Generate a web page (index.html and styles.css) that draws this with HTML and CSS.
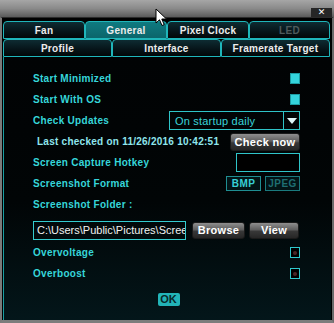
FILE: index.html
```html
<!DOCTYPE html>
<html lang="en">
<head><meta charset="UTF-8">
<meta name="viewport" content="width=device-width,initial-scale=1.0">
<title>Settings</title>
<link rel="stylesheet" href="styles.css">
</head>
<body>

<div class="window">
  <!-- title bar (only its lower part is visible) -->
  <div class="titlebar"><span class="close">&#x2715;</span></div>

  <div class="frame">
    <div class="tabs">
      <div class="tabrow four">
        <div class="tab">Fan</div>
        <div class="tab active">General</div>
        <div class="tab">Pixel Clock</div>
        <div class="tab off">LED</div>
      </div>
      <div class="tabrow three">
        <div class="tab">Profile</div>
        <div class="tab">Interface</div>
        <div class="tab">Framerate Target</div>
      </div>
    </div>

    <div class="panel">
      <div class="row">
        <span class="label">Start Minimized</span>
        <span class="check on"></span>
      </div>
      <div class="row">
        <span class="label">Start With OS</span>
        <span class="check on"></span>
      </div>
      <div class="row">
        <span class="label">Check Updates</span>
        <div class="select">
          <span class="select-text">On startup daily</span>
          <span class="select-arrow"></span>
        </div>
      </div>
      <div class="row">
        <span class="last">Last checked on 11/26/2016 10:42:51</span>
        <button class="btn check-now">Check now</button>
      </div>
      <div class="row">
        <span class="label">Screen Capture Hotkey</span>
        <span class="hotkey"></span>
      </div>
      <div class="row">
        <span class="label">Screenshot Format</span>
        <div class="formats">
          <span class="fmt sel">BMP</span>
          <span class="fmt">JPEG</span>
        </div>
      </div>
      <div class="row">
        <span class="label">Screenshot Folder :</span>
      </div>
      <div class="row path-row">
        <div class="path"><span>C:\Users\Public\Pictures\Screenshots</span></div>
        <button class="btn browse">Browse</button>
        <button class="btn view">View</button>
      </div>
      <div class="row">
        <span class="label">Overvoltage</span>
        <span class="check"></span>
      </div>
      <div class="row">
        <span class="label">Overboost</span>
        <span class="check"></span>
      </div>
      <div class="ok-row">
        <button class="ok">OK</button>
      </div>
    </div>
  </div>

  <!-- mouse pointer caught in the screenshot -->
  <svg class="cursor" width="13" height="19" viewBox="0 0 13 19">
    <path d="M1 1 L1 15 L4.5 11.8 L7 17.5 L9.2 16.6 L6.8 11 L11.5 11 Z" fill="#fff" stroke="#000" stroke-width="1"/>
  </svg>
</div>

</body>
</html>
```

FILE: styles.css
```css
*,*::before,*::after{box-sizing:border-box;margin:0;padding:0}
body{
  background:#000;
  font-family:"Liberation Sans",Arial,sans-serif;
}

/* === WINDOW === */
.window{
  position:relative;
  width:334px;
  height:323px;
  display:flex;
  flex-direction:column;
  overflow:hidden;
}
.titlebar{
  height:17px;
  background:linear-gradient(#a6a6a6 0%,#8a8a8a 50%,#5a5a5a 100%);
  display:flex;
  justify-content:flex-end;
  align-items:flex-end;
  padding:0 2px 0 0;
}
.close{
  width:21px;
  height:9px;
  background:#262626;
  color:#fff;
  font-family:"DejaVu Sans",sans-serif;
  font-size:9px;
  line-height:9px;
  text-align:center;
  overflow:hidden;
}
.frame{
  flex:1;
  display:flex;
  flex-direction:column;
  border-left:2px solid #7a7a7a;
  border-right:2px solid #6a6a6a;
  border-bottom:3px solid #7c7c7c;
  border-top:1px solid #2a2a2a;
  background:#000;
  padding:3px 1px 0 1px;
}

/* === TABS === */
.tabs{display:flex;flex-direction:column}
.tabrow{display:grid;height:18px}
.tabrow.four{grid-template-columns:82px 82px 82px 81px}
.tabrow.three{grid-template-columns:109px 109px 109px}
.tab{
  border:1px solid #1fb6ba;
  border-radius:4px 4px 0 0;
  background:linear-gradient(#0e2c32 0%,#061418 60%,#020708 100%);
  color:#ececec;
  font-weight:700;
  font-size:10px;
  letter-spacing:.3px;
  display:flex;
  justify-content:center;
  align-items:center;
  white-space:nowrap;
}
.tab.active{background:linear-gradient(#0f7a80,#0b656b)}
.tab.off{color:#4e5a5c}

/* === PANEL === */
.panel{
  flex:1;
  border-left:1px solid #1a9ea2;
  background:linear-gradient(#010304 0%,#010506 55%,#03161a 100%);
  padding:11px 31px 0 29px;
  display:flex;
  flex-direction:column;
}
.row{
  height:21px;
  display:flex;
  justify-content:space-between;
  align-items:center;
}
.label{
  color:#36d6da;
  font-weight:700;
  font-size:10px;
  letter-spacing:.3px;
  white-space:nowrap;
}
.last{
  padding-left:4px;
  color:#8fe6ee;
  font-weight:700;
  font-size:10px;
  letter-spacing:.25px;
  white-space:nowrap;
}

/* checkboxes */
.check{
  width:10px;
  height:11px;
  border:1px solid #2fc8cc;
  background:#000;
  display:flex;
  justify-content:center;
  align-items:center;
}
.check::after{
  content:"";
  width:4px;
  height:4px;
  border-radius:50%;
  background:#4a2626;
}
.check.on{background:#34d4dc;border-color:#1c9ca2}
.check.on::after{display:none}

/* dropdown */
.select{
  width:131px;
  height:19px;
  border:1px solid #2fc4c8;
  display:flex;
  align-items:center;
}
.select-text{
  flex:1;
  padding-left:5px;
  color:#3ad4da;
  font-size:11px;
  letter-spacing:.2px;
}
.select-arrow{
  width:16px;
  height:100%;
  border-left:1px solid #2fc4c8;
  display:flex;
  justify-content:center;
  align-items:center;
}
.select-arrow::after{
  content:"";
  border-left:5px solid transparent;
  border-right:5px solid transparent;
  border-top:6px solid #dff6f8;
}

/* grey buttons */
.btn{
  height:17px;
  border:1px solid #1a1a1a;
  border-radius:3px;
  background:linear-gradient(#8e8e8e 0%,#5e5e5e 45%,#383838 55%,#262626 100%);
  color:#fff;
  font-family:inherit;
  font-weight:700;
  font-size:11px;
  letter-spacing:.3px;
  white-space:nowrap;
  display:flex;
  justify-content:center;
  align-items:center;
}
.check-now{width:70px;height:18px}
.browse{width:53px}
.view{width:50px}

.hotkey{
  width:64px;
  height:19px;
  border:1px solid #2fc4c8;
  background:#000;
}

.formats{display:flex;gap:4px}
.fmt{
  width:35px;
  height:15px;
  border:1px solid #1a7a7e;
  background:#031416;
  color:#1f6e72;
  font-weight:700;
  font-size:10px;
  letter-spacing:.4px;
  display:flex;
  justify-content:center;
  align-items:center;
}
.fmt.sel{color:#38d0d6;border-color:#1f8e92}

/* folder row */
.path-row{
  height:24px;
  margin-top:3px;
  justify-content:flex-start;
  gap:6px;
}
.path-row .view{margin-left:-2px}
.path{
  width:153px;
  height:19px;
  border:1px solid #34ccd0;
  padding:0 0 0 3px;
  color:#f2f2f2;
  font-size:11px;
  line-height:17px;
  white-space:nowrap;
  overflow:hidden;
}

.ok-row{
  display:flex;
  justify-content:center;
  margin-top:9px;
  padding-left:4px;
}
.ok{
  width:22px;
  height:13px;
  border:none;
  border-radius:2px;
  background:#22b4b8;
  color:#08282a;
  font-family:inherit;
  font-weight:700;
  font-size:11px;
  line-height:13px;
}

/* pointer overlay */
.cursor{position:absolute;left:155px;top:8px}
```
